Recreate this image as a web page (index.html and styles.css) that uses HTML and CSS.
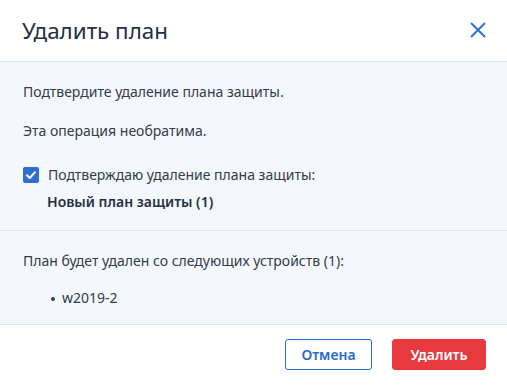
FILE: index.html
```html
<!DOCTYPE html>
<html lang="ru">
<head>
<meta charset="utf-8">
<link rel="stylesheet" href="styles.css">
</head>
<body>
<div class="dialog">
  <header class="dialog-header">
    <h1 class="dialog-title">Удалить план</h1>
    <button class="close-btn" aria-label="Закрыть">
      <svg width="16" height="16" viewBox="0 0 16 16"><path d="M1 1 L15 15 M15 1 L1 15" stroke="currentColor" stroke-width="2" fill="none"/></svg>
    </button>
  </header>
  <section class="section section-confirm">
    <p class="text">Подтвердите удаление плана защиты.</p>
    <p class="text">Эта операция необратима.</p>
    <label class="check-row">
      <span class="checkbox">
        <svg width="16" height="16" viewBox="0 0 16 16"><path d="M4 8.2 L6.8 11 L12 5.2" stroke="#fff" stroke-width="2" fill="none" stroke-linecap="round" stroke-linejoin="round"/></svg>
      </span>
      <span class="text">Подтверждаю удаление плана защиты:</span>
    </label>
    <p class="plan-name">Новый план защиты (1)</p>
  </section>
  <section class="section section-devices">
    <p class="text">План будет удален со следующих устройств (1):</p>
    <ul class="device-list">
      <li>w2019-2</li>
    </ul>
  </section>
  <footer class="dialog-footer">
    <button class="btn btn-secondary">Отмена</button>
    <button class="btn btn-danger">Удалить</button>
  </footer>
</div>
</body>
</html>
```
FILE: styles.css
```css
* { box-sizing: border-box; }
html, body { margin: 0; padding: 0; }
body {
  font-family: "Noto Sans", "Open Sans", sans-serif;
  background: #fff;
  color: #2f3a48;
  width: 507px;
  height: 385px;
  overflow: hidden;
}
.dialog { display: flex; flex-direction: column; height: 385px; }
.dialog-header {
  height: 62px;
  display: flex;
  align-items: center;
  justify-content: space-between;
  padding: 0 21px 0 22px;
  border-bottom: 1px solid #d8e2f0;
  background: #fff;
}
.dialog-title {
  margin: 0;
  font-size: 22.4px;
  font-weight: 400;
  color: #243142;
  line-height: 30px;
  padding-top: 1px;
}
.close-btn {
  border: 0;
  background: none;
  padding: 0;
  width: 16px;
  height: 16px;
  color: #2f72d6;
  display: flex;
  margin-top: -1px;
}
.section {
  background: #f4f7fb;
  padding: 20px 23px 18px;
  border-bottom: 1px solid #d8e2f0;
}
.text {
  margin: 0;
  font-size: 14px;
  line-height: 20px;
  color: #333c48;
}
.section-confirm .text + .text { margin-top: 19px; }
.check-row {
  display: flex;
  align-items: center;
  gap: 9px;
  margin-top: 24px;
}
.checkbox {
  width: 16px;
  height: 16px;
  background: #2f6fcf;
  border-radius: 2px;
  display: flex;
  flex: none;
}
.plan-name {
  margin: 7px 0 0 24px;
  font-size: 14px;
  line-height: 20px;
  font-weight: 600;
  color: #243142;
}
.section-devices { padding: 20px 23px 16px; height: 94px; }
.device-list {
  list-style: none;
  margin: 17px 0 0;
  padding: 0 0 0 39px;
  font-size: 14px;
  line-height: 20px;
  color: #333c48;
}
.device-list li { position: relative; }
.device-list li::before {
  content: "";
  position: absolute;
  left: -11px;
  top: 9px;
  width: 4px;
  height: 4px;
  border-radius: 50%;
  background: #333c48;
}
.dialog-footer {
  flex: 1;
  background: #fff;
  display: flex;
  justify-content: flex-end;
  align-items: center;
  gap: 20px;
  padding: 0 21px 1px;
}
.btn {
  height: 31px;
  font-family: inherit;
  font-size: 14px;
  font-weight: 600;
  border-radius: 3px;
  cursor: pointer;
}
.btn-secondary {
  width: 87px;
  background: #fff;
  border: 1px solid #2a6acb;
  color: #2a6acb;
}
.btn-danger {
  width: 94px;
  background: #e8393e;
  border: 1px solid #e8393e;
  color: #fff;
}
```
